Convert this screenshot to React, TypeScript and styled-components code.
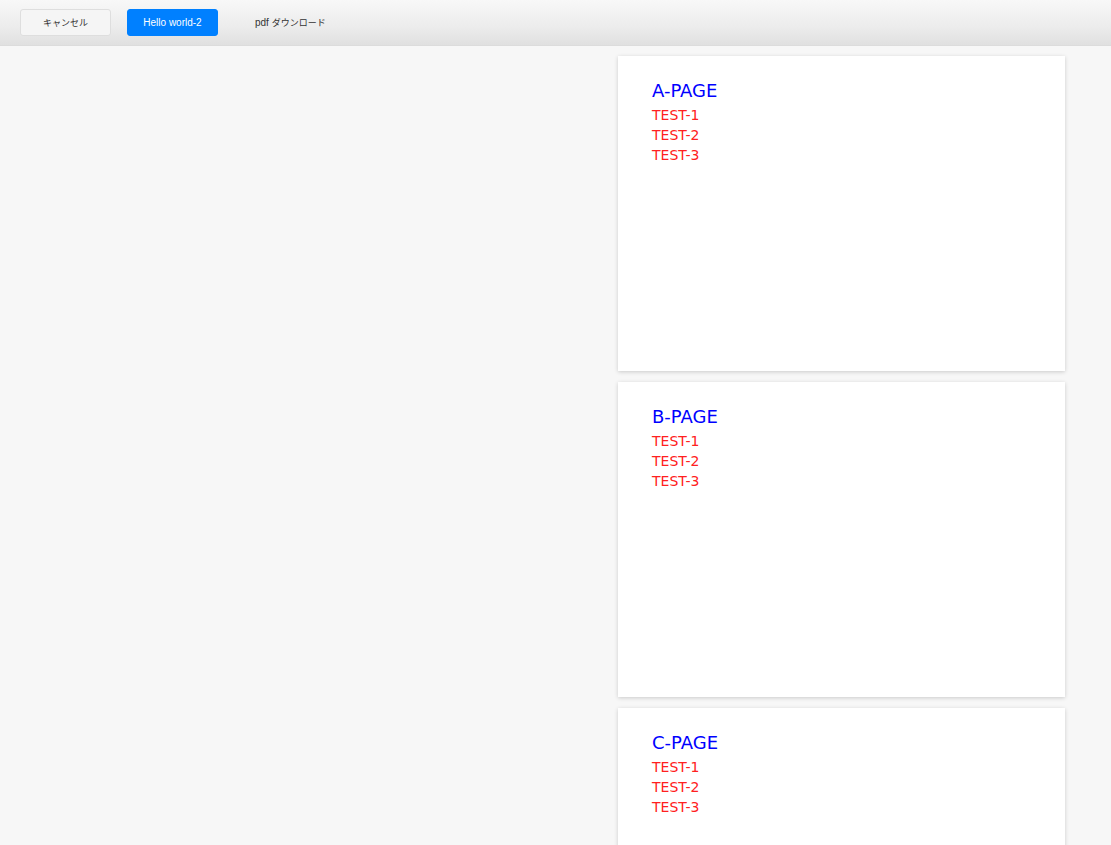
import React from 'react';
import styled, { createGlobalStyle } from 'styled-components';

const GlobalStyle = createGlobalStyle`
  html, body {
    margin: 0;
    padding: 0;
    background: #f7f7f7;
    font-family: "DejaVu Sans", "Noto Sans CJK JP", sans-serif;
  }
`;

const Toolbar = styled.div`
  height: 46px;
  display: flex;
  flex-direction: row;
  align-items: center;
  padding: 0 20px;
  box-sizing: border-box;
  background: linear-gradient(to bottom, #f8f8f8 0%, #ececec 60%, #e0e0e0 100%);
  border-bottom: 1px solid #dcdcdc;
  gap: 16px;
`;

const ToolButton = styled.button<{ $primary?: boolean; $plain?: boolean }>`
  height: 27px;
  min-width: ${(p) => (p.$plain ? '0' : '91px')};
  padding: 0 ${(p) => (p.$plain ? '20px' : '8px')};
  border-radius: 3px;
  font-family: "Liberation Sans", "Noto Sans CJK JP", sans-serif;
  font-size: 10px;
  cursor: pointer;
  border: 1px solid ${(p) => (p.$primary ? '#0080ff' : p.$plain ? 'transparent' : '#dedede')};
  background: ${(p) => (p.$primary ? '#0080ff' : p.$plain ? 'transparent' : '#f5f5f5')};
  color: ${(p) => (p.$primary ? '#ffffff' : '#333333')};
`;

const Kana = styled.span`
  font-family: "Noto Sans CJK JP", sans-serif;
  font-size: 9px;
`;

const Canvas = styled.div`
  display: flex;
  flex-direction: column;
  align-items: flex-end;
  padding: 10px 46px 0 0;
  gap: 11px;
`;

const Page = styled.div`
  width: 447px;
  height: 315px;
  background: #ffffff;
  box-shadow: 0 1px 4px rgba(0, 0, 0, 0.18);
  padding: 23px 34px;
  box-sizing: border-box;
`;

const PageTitle = styled.div`
  color: #0000ff;
  font-family: "DejaVu Sans", sans-serif;
  font-size: 18px;
  line-height: 24px;
  margin-bottom: 2px;
`;

const PageLine = styled.div`
  color: #ff2020;
  font-family: "DejaVu Sans", sans-serif;
  font-size: 14px;
  line-height: 20px;
`;

const pages = ['A-PAGE', 'B-PAGE', 'C-PAGE'];

export default function App(): React.ReactElement {
  return (
    <>
      <GlobalStyle />
      <Toolbar>
        <ToolButton><Kana>キャンセル</Kana></ToolButton>
        <ToolButton $primary>Hello world-2</ToolButton>
        <ToolButton $plain>pdf <Kana>ダウンロード</Kana></ToolButton>
      </Toolbar>
      <Canvas>
        {pages.map((title) => (
          <Page key={title}>
            <PageTitle>{title}</PageTitle>
            <PageLine>TEST-1</PageLine>
            <PageLine>TEST-2</PageLine>
            <PageLine>TEST-3</PageLine>
          </Page>
        ))}
      </Canvas>
    </>
  );
}
